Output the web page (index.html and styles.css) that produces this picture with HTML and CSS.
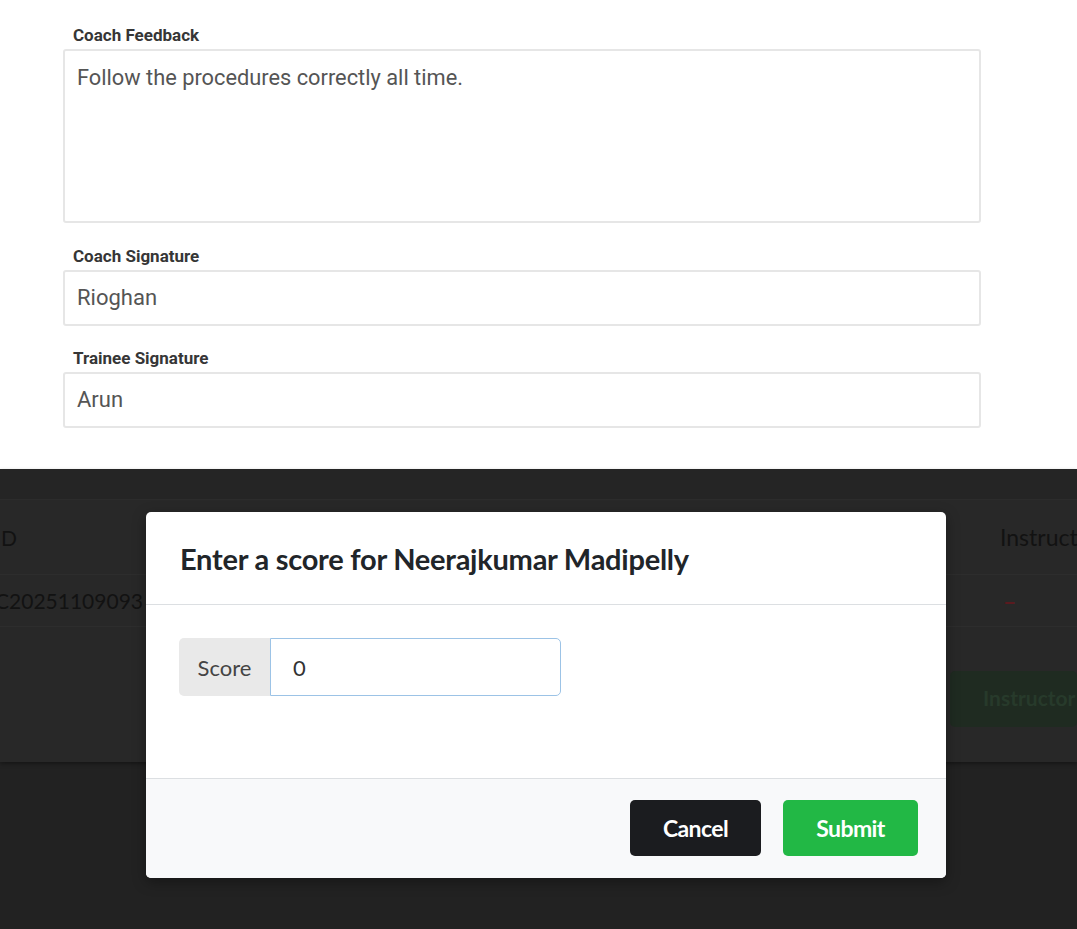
FILE: index.html
```html
<!DOCTYPE html>
<html lang="en">
<head>
<meta charset="utf-8">
<title>Coach Feedback</title>
<link rel="stylesheet" href="styles.css">
</head>
<body>
<section class="form">
  <div class="field">
    <label class="field-label">Coach Feedback</label>
    <div class="control textarea">Follow the procedures correctly all time.</div>
  </div>
  <div class="field">
    <label class="field-label">Coach Signature</label>
    <div class="control">Rioghan</div>
  </div>
  <div class="field">
    <label class="field-label">Trainee Signature</label>
    <div class="control">Arun</div>
  </div>
</section>

<section class="backdrop">
  <div class="page">
    <div class="page-top"></div>
    <div class="table">
      <div class="row head">
        <div class="cell id">ID</div>
        <div class="cell instr">Instructor</div>
      </div>
      <div class="row">
        <div class="cell id">C20251109093</div>
        <div class="cell instr"><span class="dash">–</span></div>
      </div>
    </div>
    <div class="actions">
      <div class="ghost-btn">Instructor</div>
    </div>
  </div>

  <div class="modal">
    <div class="modal-header">
      <h2 class="modal-title">Enter a score for Neerajkumar Madipelly</h2>
    </div>
    <div class="modal-body">
      <div class="input-group">
        <span class="addon">Score</span>
        <div class="score-input">0</div>
      </div>
    </div>
    <div class="modal-footer">
      <button class="btn btn-dark">Cancel</button>
      <button class="btn btn-green">Submit</button>
    </div>
  </div>
</section>
</body>
</html>
```

FILE: styles.css
```css
* { box-sizing: border-box; }
html, body { margin: 0; padding: 0; }
body {
  width: 1077px;
  height: 929px;
  overflow: hidden;
  background: #ffffff;
  font-family: Roboto, "Liberation Sans", sans-serif;
}

.form {
  height: 469px;
  padding: 25px 0 0 63px;
  background: #ffffff;
}
.field { width: 918px; margin-bottom: 23px; }
.field:nth-child(2) { margin-bottom: 22px; }
.field-label {
  display: block;
  padding-left: 10px;
  font-size: 17px;
  line-height: 20px;
  font-weight: 700;
  color: #363636;
  margin-bottom: 4px;
}
.control {
  border: 2px solid #e6e6e6;
  border-radius: 3px;
  padding: 14px 12px;
  font-size: 22px;
  line-height: 24px;
  color: #555555;
  height: 56px;
}
.control.textarea {
  height: 174px;
  padding-top: 15px;
  font-size: 21.8px;
}

.backdrop {
  position: relative;
  height: 460px;
  background: #222222;
  font-family: Lato, "Open Sans", sans-serif;
}
.page {
  height: 293px;
  background: #282828;
  box-shadow: 0 2px 4px rgba(0,0,0,0.35);
  overflow: hidden;
}
.page-top {
  height: 31px;
  background: #252525;
  border-bottom: 1px solid #2c2c2c;
}
.table { margin-left: -5px; }
.row {
  display: flex;
  justify-content: space-between;
  border-bottom: 1px solid #2d2d2d;
  height: 52px;
  align-items: center;
}
.row.head { height: 75px; }
.cell {
  font-size: 21px;
  color: #121212;
}
.cell.instr { width: 77px; font-size: 23px; white-space: nowrap; overflow: hidden; }
.dash { color: #5a1a1f; font-weight: 700; padding-left: 3px; }
.actions {
  display: flex;
  justify-content: flex-end;
  padding-top: 44px;
}
.ghost-btn {
  width: 127px;
  height: 56px;
  background: #1f2b21;
  border-radius: 5px;
  color: #273a2b;
  font-size: 21px;
  font-weight: 700;
  padding: 14px 0 0 33px;
  white-space: nowrap;
  overflow: hidden;
}

.modal {
  position: absolute;
  left: 146px;
  top: 43px;
  width: 800px;
  height: 366px;
  background: #ffffff;
  border-radius: 5px;
  overflow: hidden;
  box-shadow: 0 4px 14px rgba(0,0,0,0.35);
  display: flex;
  flex-direction: column;
}
.modal-header {
  height: 93px;
  border-bottom: 1px solid #dcdfe2;
  display: flex;
  align-items: center;
  padding: 0 34px;
}
.modal-title {
  margin: 0;
  font-size: 29px;
  font-weight: 700;
  color: #212529;
  letter-spacing: -0.25px;
}
.modal-body {
  height: 173px;
  padding: 33px 33px;
}
.input-group {
  display: flex;
  width: 382px;
  height: 58px;
}
.addon {
  width: 91px;
  background: #e9e9e9;
  border-radius: 5px 0 0 5px;
  display: flex;
  align-items: center;
  justify-content: center;
  font-size: 22px;
  color: #444444;
}
.score-input {
  flex: 1;
  border: 1px solid #9cc3e6;
  border-radius: 0 5px 5px 0;
  display: flex;
  align-items: center;
  padding-left: 22px;
  font-size: 22px;
  color: #333333;
}
.modal-footer {
  flex: 1;
  background: #f8f9fa;
  border-top: 1px solid #dcdfe2;
  display: flex;
  justify-content: flex-end;
  align-items: flex-start;
  gap: 22px;
  padding: 21px 28px 0 0;
}
.btn {
  height: 56px;
  border: none;
  border-radius: 5px;
  font-family: Lato, "Open Sans", sans-serif;
  font-size: 23px;
  font-weight: 700;
  letter-spacing: -0.6px;
  color: #ffffff;
  padding: 0;
}
.btn-dark { width: 131px; background: #1b1c1f; }
.btn-green { width: 135px; background: #22b845; }
```
